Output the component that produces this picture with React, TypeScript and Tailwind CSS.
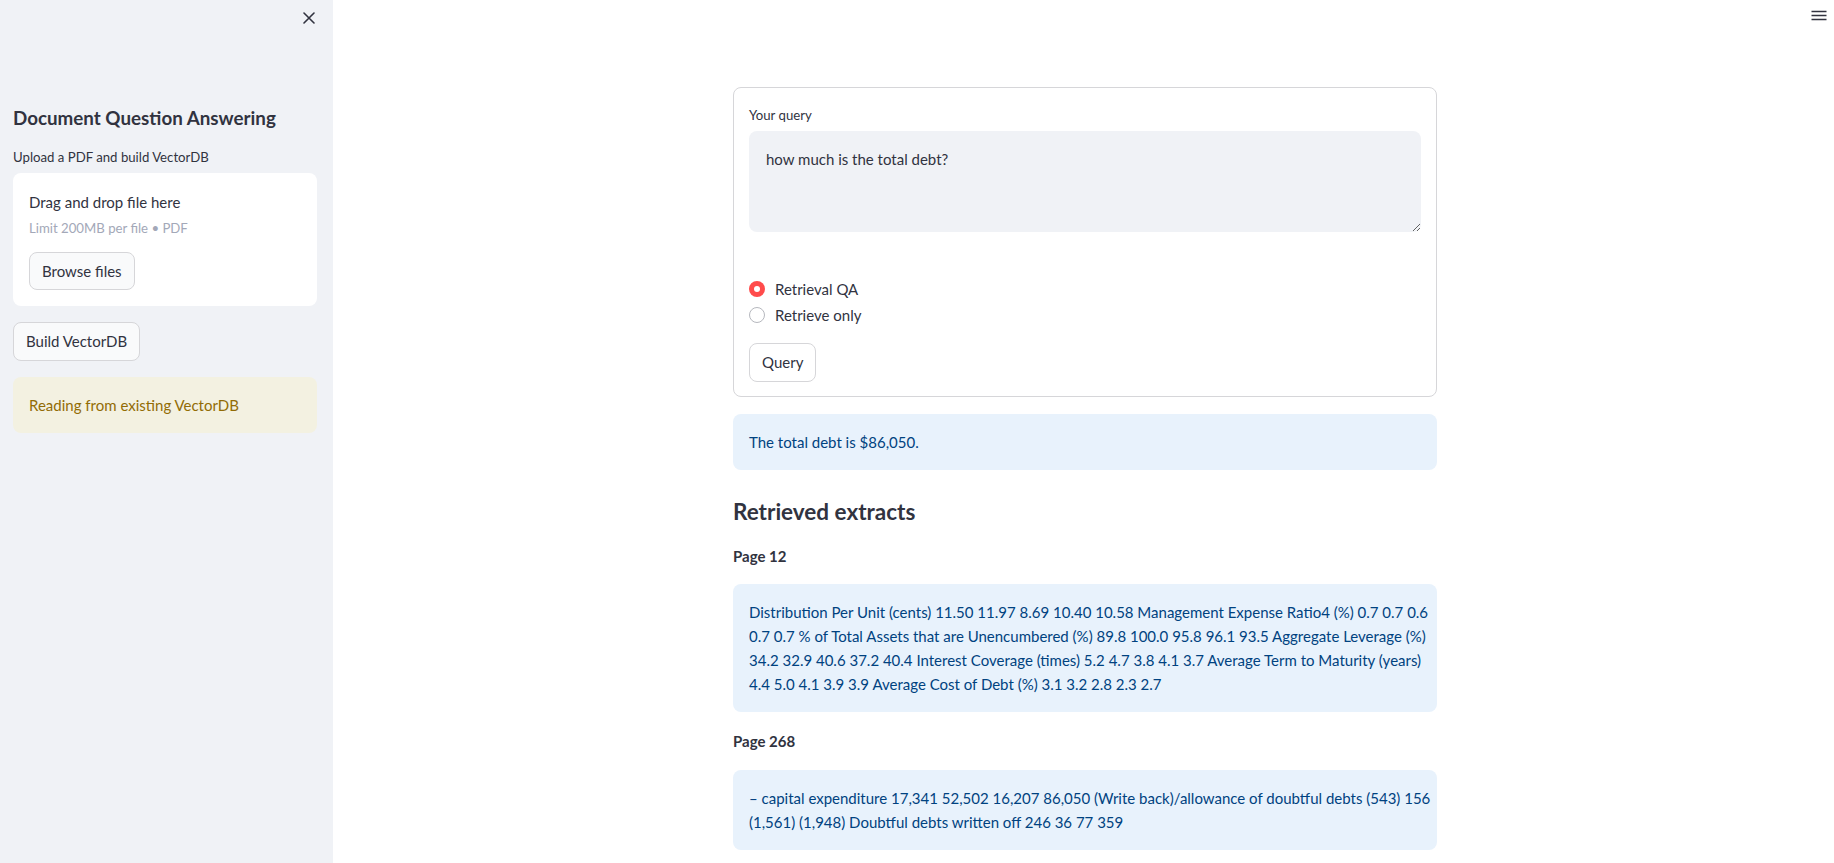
import React from "react";

const FONT = { fontFamily: '"Lato", "Source Sans Pro", "Noto Sans", sans-serif' };

function CloseIcon() {
  return (
    <svg width="12" height="12" viewBox="0 0 12 12" fill="none" stroke="#31333f" strokeWidth="1.6" strokeLinecap="round">
      <path d="M1 1 L11 11 M11 1 L1 11" />
    </svg>
  );
}

function Hamburger() {
  return (
    <svg width="16" height="12" viewBox="0 0 16 12" fill="none" stroke="#31333f" strokeWidth="1.6">
      <path d="M0.5 1.5 H15.5 M0.5 5.5 H15.5 M0.5 9.5 H15.5" />
    </svg>
  );
}

function Sidebar() {
  return (
    <aside className="w-[333px] shrink-0 h-[863px] bg-[#f0f2f6] flex flex-col pl-[13px] pr-[16px] text-[#31333f]">
      <div className="h-[36px] flex justify-end items-center -mr-[14px] pr-[16px]">
        <CloseIcon />
      </div>
      <h2 className="mt-[68px] text-[18.8px] leading-[28px] font-bold">Document Question Answering</h2>
      <div className="mt-[15px] text-[13.2px] leading-[20px]">Upload a PDF and build VectorDB</div>
      <div className="mt-[6px] bg-white rounded-[8px] pl-[16px] pr-[16px] pt-[17px] pb-[16px] flex flex-col items-start">
        <div className="text-[15px] leading-[24px]">Drag and drop file here</div>
        <div className="mt-[4px] text-[13.2px] leading-[20px] text-[#a3a8b8]">Limit 200MB per file • PDF</div>
        <button className="mt-[14px] h-[38px] px-[12px] rounded-[8px] border border-[#d6d6d9] bg-[#f9fafb] text-[15px] text-[#31333f]">
          Browse files
        </button>
      </div>
      <div className="mt-[16px]">
        <button className="h-[39px] px-[12px] rounded-[8px] border border-[#d6d6d9] bg-[#f9fafb] text-[15px] text-[#31333f]">
          Build VectorDB
        </button>
      </div>
      <div className="mt-[16px] rounded-[8px] bg-[#f3f1e1] px-[16px] py-[16px] text-[15px] leading-[24px] text-[#926c05]">
        Reading from existing VectorDB
      </div>
    </aside>
  );
}

function Main() {
  return (
    <main className="relative flex-1 h-[863px] overflow-hidden bg-white text-[#31333f] pl-[3px]">
      <div className="absolute top-[10px] right-[7px]">
        <Hamburger />
      </div>
      <div className="w-[704px] mx-auto pt-[87px]">
        <div className="border border-[#d6d6d9] rounded-[8px] px-[15px] pt-[17px] pb-[14px]">
          <div className="text-[13.2px] leading-[20px]">Your query</div>
          <textarea
            className="mt-[6px] block w-full h-[101px] rounded-[8px] bg-[#f0f2f6] px-[17px] py-[16px] text-[15px] leading-[25px] text-[#31333f] outline-none"
            style={FONT}
            defaultValue="how much is the total debt?"
          />
          <div className="mt-[44px] flex flex-col">
            <div className="h-[26px] flex items-center">
              <span className="w-[16px] h-[16px] rounded-full bg-[#ff4b4b] flex items-center justify-center">
                <span className="w-[6px] h-[6px] rounded-full bg-white" />
              </span>
              <span className="ml-[10px] text-[15px]">Retrieval QA</span>
            </div>
            <div className="h-[26px] flex items-center">
              <span className="w-[16px] h-[16px] rounded-full border border-[#b6b8be] bg-white" />
              <span className="ml-[10px] text-[15px]">Retrieve only</span>
            </div>
          </div>
          <button className="mt-[15px] h-[39px] px-[12px] rounded-[8px] border border-[#d6d6d9] bg-white text-[15px] text-[#31333f]">
            Query
          </button>
        </div>

        <div className="mt-[17px] rounded-[8px] bg-[#e8f2fc] px-[16px] py-[16px] text-[15px] leading-[24px] text-[#004280]">
          The total debt is $86,050.
        </div>

        <h3 className="mt-[26px] text-[22.5px] leading-[32px] font-bold">Retrieved extracts</h3>
        <div className="mt-[16px] text-[15px] leading-[24px] font-bold">Page 12</div>
        <div className="mt-[16px] rounded-[8px] bg-[#e8f2fc] px-[16px] py-[16px] text-[15px] leading-[24px] text-[#004280]">
          <div className="whitespace-nowrap">Distribution Per Unit (cents) 11.50 11.97 8.69 10.40 10.58 Management Expense Ratio4 (%) 0.7 0.7 0.6</div>
          <div className="whitespace-nowrap">0.7 0.7 % of Total Assets that are Unencumbered (%) 89.8 100.0 95.8 96.1 93.5 Aggregate Leverage (%)</div>
          <div className="whitespace-nowrap">34.2 32.9 40.6 37.2 40.4 Interest Coverage (times) 5.2 4.7 3.8 4.1 3.7 Average Term to Maturity (years)</div>
          <div className="whitespace-nowrap">4.4 5.0 4.1 3.9 3.9 Average Cost of Debt (%) 3.1 3.2 2.8 2.3 2.7</div>
        </div>
        <div className="mt-[17px] text-[15px] leading-[24px] font-bold">Page 268</div>
        <div className="mt-[17px] rounded-[8px] bg-[#e8f2fc] px-[16px] py-[16px] text-[15px] leading-[24px] text-[#004280]">
          <div className="whitespace-nowrap">– capital expenditure 17,341 52,502 16,207 86,050 (Write back)/allowance of doubtful debts (543) 156</div>
          <div className="whitespace-nowrap">(1,561) (1,948) Doubtful debts written off 246 36 77 359</div>
        </div>
      </div>
    </main>
  );
}

export default function App() {
  return (
    <div className="flex w-[1834px] h-[863px] overflow-hidden" style={FONT}>
      <Sidebar />
      <Main />
    </div>
  );
}
